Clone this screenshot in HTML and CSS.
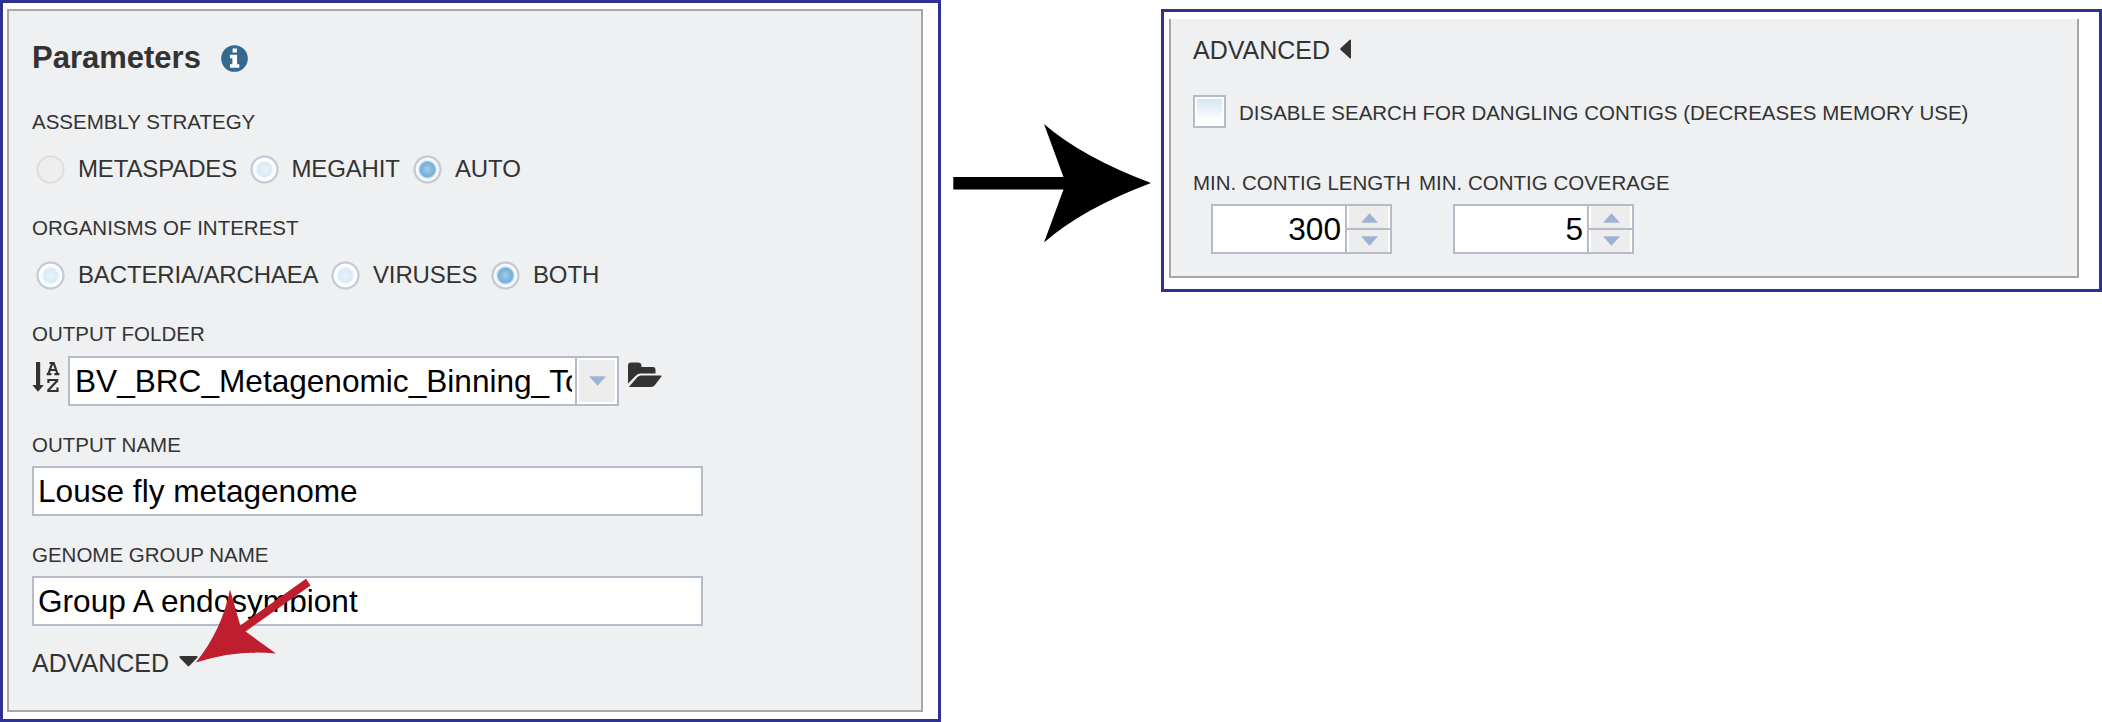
FILE: index.html
```html
<!DOCTYPE html>
<html lang="en">
<head>
<meta charset="utf-8">
<title>Parameters</title>
<link rel="stylesheet" href="styles.css">
</head>
<body>
<main class="page">
  <section class="frame frame-main">
    <div class="panel panel-main">
      <div class="heading"><h1 class="t-heading">Parameters</h1>
        <svg class="info" viewBox="0 0 28 28"><circle cx="14" cy="14" r="13.8" fill="#35698f"/><path fill="#fff" d="M12 3.500h4.500v4.200H12zM9.300 10h7.400v10h2.300v3.700H9.300V20h2.500v-6.300H9.300z"/></svg>
      </div>
      <div class="label label-strategy">ASSEMBLY STRATEGY</div>
      <div class="options strategy">
        <span class="option"><i class="radio off"></i><span>METASPADES</span></span>
        <span class="option"><i class="radio"></i><span>MEGAHIT</span></span>
        <span class="option"><i class="radio on"></i><span>AUTO</span></span>
      </div>
      <div class="label label-organisms">ORGANISMS OF INTEREST</div>
      <div class="options organisms">
        <span class="option"><i class="radio"></i><span>BACTERIA/ARCHAEA</span></span>
        <span class="option"><i class="radio"></i><span>VIRUSES</span></span>
        <span class="option"><i class="radio on"></i><span>BOTH</span></span>
      </div>
      <div class="label label-folder">OUTPUT FOLDER</div>
      <div class="folder-row">
        <svg class="sort" viewBox="0 0 28 32"><path fill="#333" d="M4 1h4.200v23H11.800L6 30.800.3 24H4z"/><g fill="none" stroke="#333" stroke-width="2.200"><path d="M16.300 13l4-11h1.400L25.500 13M17.700 9h6.400M14.600 13.100h4.800M22.400 13.100H27.400M17.500 2h4"/><path d="M16.400 22v-3h8.800v.8L16.300 29.200V30H25.500V26.500"/></g></svg>
        <div class="combo"><div class="combo-text">BV_BRC_Metagenomic_Binning_Tool</div><div class="combo-button"><svg viewBox="0 0 16 9"><path fill="#9db3d4" d="M0 0h16L8 9z"/></svg></div></div>
        <svg class="folder" viewBox="0 0 34 26"><path fill="#333" d="M0 21.500V3.500Q0 .5 3 .5H10Q13.500.5 13.500 4V5H25Q27.500 5 27.500 8v3.500H12Q9.500 11.500 7.500 14z"/><path fill="#333" d="M.8 25L9.500 15Q11 13.500 13 13.500H33Q34 13.500 33.200 14.800L27 23Q25.500 25 23 25z"/></svg>
      </div>
      <div class="label label-name">OUTPUT NAME</div>
      <div class="field">Louse fly metagenome</div>
      <div class="label label-group">GENOME GROUP NAME</div>
      <div class="field">Group A endosymbiont</div>
      <div class="advanced"><span class="advanced-text">ADVANCED</span><svg class="caret-down" viewBox="0 0 19 11"><path fill="#333" d="M1.500 0h16Q19.500.5 18 2L10.500 9.700Q9.500 10.700 8.500 9.700L1 2Q-.5.5 1.500 0z"/></svg></div>
    </div>
  </section>
  <svg class="flow-arrow" viewBox="0 0 200 120"><path d="M.3 54H110.500L91 1Q129 34 198 60Q129 86 91 119.500L110.500 66.600H.3z"/></svg>
  <section class="frame frame-advanced">
    <div class="panel panel-advanced">
      <div class="advanced-title"><span class="advanced-text">ADVANCED</span><svg class="caret-left" viewBox="0 0 11 20"><path fill="#333" d="M11 1v18Q10.500 20 9.500 19L.7 11Q-.3 10 .7 9L9.500 1Q10.500 0 11 1z"/></svg></div>
      <div class="check-row"><i class="checkbox"></i><span>DISABLE SEARCH FOR DANGLING CONTIGS (DECREASES MEMORY USE)</span></div>
      <div class="numbers">
        <div class="label">MIN. CONTIG LENGTH</div>
        <div class="label">MIN. CONTIG COVERAGE</div>
        <div class="spinner"><div class="value">300</div><div class="steps"><b><svg viewBox="0 0 16 9"><path fill="#9db3d4" d="M0 9h16L8 0z"/></svg></b><b><svg viewBox="0 0 16 9"><path fill="#9db3d4" d="M0 0h16L8 9z"/></svg></b></div></div>
        <div class="spinner"><div class="value">5</div><div class="steps"><b><svg viewBox="0 0 16 9"><path fill="#9db3d4" d="M0 9h16L8 0z"/></svg></b><b><svg viewBox="0 0 16 9"><path fill="#9db3d4" d="M0 0h16L8 9z"/></svg></b></div></div>
      </div>
    </div>
  </section>
  <svg class="pointer" viewBox="0 0 120 90"><path fill="#be1e2d" d="M.8 87.500Q27 55 35 14.500L45.300 50.500L111 3.700L115.500 10.500L50.500 56.500L81 78.500Q42 74 .8 87.500z"/></svg>
</main>
</body>
</html>
```
FILE: styles.css
```css
* { box-sizing: border-box; }
body { margin: 0; background: #fff; font-family: "Liberation Sans", Arial, sans-serif; color: #333; white-space: nowrap; }
svg { display: block; flex: none; }
.page { position: relative; width: 2102px; height: 722px; display: flex; align-items: flex-start; overflow: hidden; }
.frame { border: 3px solid #2e3192; flex: none; }
.frame-main { width: 941px; height: 722px; padding: 6px 0 0 4px; }
.panel { background: #eff0f2; border: 2px solid #a7a7a8; }
.panel-main { width: 916px; height: 703px; padding: 27px 0 0 23px; }
.heading { display: flex; align-items: center; height: 40px; }
.t-heading { margin: 0; width: 189px; font-size: 31px; line-height: 40px; }
.info { width: 27px; height: 27px; }
.label { height: 24px; font-size: 20.5px; line-height: 24px; }
.label-strategy { margin-top: 32px; }
.options { display: grid; height: 32px; margin-top: 19px; padding-left: 4px; font-size: 24px; line-height: 32px; letter-spacing: -.14px; }
.strategy { grid-template-columns: 213.5px 163.5px 120px; }
.organisms { grid-template-columns: 295px 160px 120px; }
.option { display: flex; align-items: center; gap: 13px; }
.radio { flex: none; width: 29px; height: 29px; border-radius: 50%; background: radial-gradient(closest-side, #e9f4fc 0, #d9eaf6 46%, #f7fbfe 60%, #fff 78%, #bcc3d2 86%, #c9cedb 94%, #e6e8ed 100%); }
.radio.off { background: radial-gradient(closest-side, #eeeeee 80%, #dcdcdb 87%, #e0e0e0 94%, #ececed 100%); }
.radio.on { background: radial-gradient(closest-side, #a9cde8 0, #84b8dd 30%, #78b0d8 50%, #e0edf7 62%, #fff 76%, #bcc3d2 86%, #c9cedb 94%, #e6e8ed 100%); }
.label-organisms { margin-top: 31px; }
.label-folder { margin-top: 31px; }
.folder-row { display: flex; height: 50px; margin-top: 10px; }
.sort { width: 28px; height: 32px; margin: 5px 8px 0 0; }
.combo { width: 551px; height: 50px; display: flex; border: 2px solid #b5bcc8; background: #fff; }
.combo-text { width: 497px; margin: 0 3px 0 5px; overflow: hidden; font-size: 31.6px; line-height: 46px; color: #000; }
.combo-button { flex: 1; border-left: 2px solid #b5bcc8; background: #ededed; box-shadow: inset 0 0 0 2px #fff; display: flex; align-items: center; justify-content: center; }
.combo-button svg { width: 17px; height: 10px; }
.folder { width: 34px; height: 26px; margin: 6px 0 0 9px; }
.label-name { margin-top: 27px; }
.label-group { margin-top: 27px; }
.field { width: 671px; height: 50px; margin-top: 9px; padding-left: 4px; border: 2px solid #b5bcc8; background: #fff; color: #000; font-size: 31.6px; line-height: 46px; }
.advanced { display: flex; height: 32px; margin-top: 21px; font-size: 25px; line-height: 32px; }
.advanced-text { width: 147px; }
.caret-down { width: 19px; height: 11px; margin: 9px 0 0; }
.flow-arrow { width: 200px; height: 120px; margin: 123px 0 0 12px; }
.frame-advanced { width: 941px; height: 283px; margin: 9px 0 0 8px; padding: 7px 0 0 5px; }
.panel-advanced { width: 910px; height: 259px; border-top: 0; padding: 15px 0 0 22px; }
.advanced-title { display: flex; height: 32px; font-size: 25px; line-height: 33px; }
.caret-left { width: 11px; height: 20px; margin: 5px 0 0; }
.check-row { display: flex; height: 34px; margin-top: 29px; gap: 13px; font-size: 20.5px; line-height: 36px; }
.checkbox { width: 33px; height: 33px; border: 2px solid #b5bcc8; box-shadow: inset 0 0 0 2px #fff; background: linear-gradient(#d2e4f0, #fff 85%); }
.numbers { display: grid; grid-template-columns: 226px 260px; margin-top: 42px; row-gap: 9px; }
.spinner { display: flex; width: 181px; height: 50px; margin-left: 18px; border: 2px solid #b5bcc8; background: #fff; }
.numbers .spinner:last-child { margin-left: 34px; }
.value { width: 132px; padding-right: 4px; text-align: right; font-size: 31.6px; line-height: 47px; color: #000; }
.steps { flex: 1; display: grid; grid-template-rows: 24px 22px; border-left: 2px solid #b5bcc8; }
.steps b { display: flex; align-items: center; justify-content: center; background: #ededed; box-shadow: inset 2px 0 #fff, inset -2px 0 #fff; }
.steps b:first-child { border-bottom: 2px solid #b5bcc8; }
.steps b:first-child svg { margin-top: 2px; }
.steps svg { width: 17px; height: 10px; margin-left: 2px; }
.pointer { position: absolute; left: 195px; top: 575px; width: 120px; height: 90px; }
```
